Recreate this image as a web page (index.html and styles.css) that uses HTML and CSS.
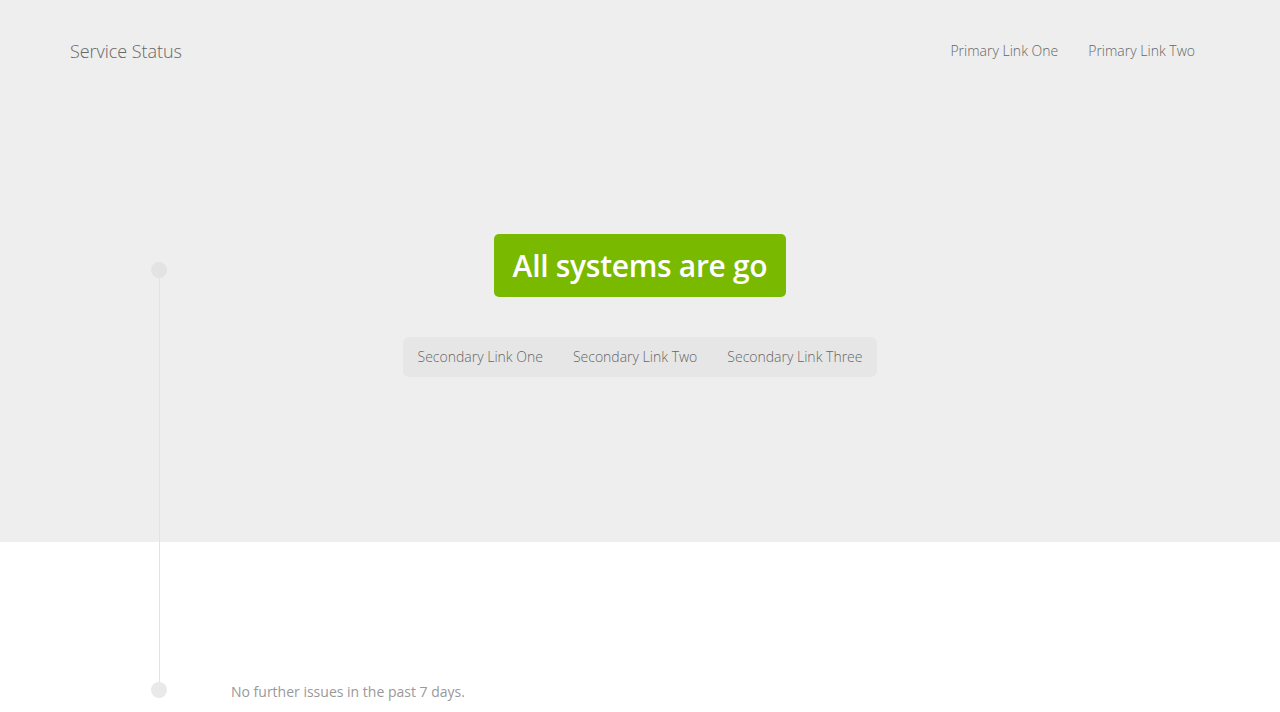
FILE: index.html
```html
<!DOCTYPE html>
<html>
<head>
<meta charset="utf-8">
<link rel="stylesheet" href="styles.css">
</head>
<body>
<div class="hero">
  <header class="topbar">
    <div class="brand">Service Status</div>
    <nav class="primary">
      <a href="#">Primary Link One</a>
      <a href="#">Primary Link Two</a>
    </nav>
  </header>
  <div class="status">
    <div class="badge">All systems are go</div>
    <nav class="secondary">
      <a href="#">Secondary Link One</a>
      <a href="#">Secondary Link Two</a>
      <a href="#">Secondary Link Three</a>
    </nav>
  </div>
</div>
<main class="history">
  <p class="note">No further issues in the past 7 days.</p>
</main>
<div class="timeline">
  <span class="dot top"></span>
  <span class="line"></span>
  <span class="dot bottom"></span>
</div>
</body>
</html>
```
FILE: styles.css
```css
* { box-sizing: border-box; }
html, body { margin: 0; padding: 0; }
body {
  font-family: "Open Sans", "Liberation Sans", sans-serif;
  background: #fff;
  color: #666;
  position: relative;
  height: 712px;
  overflow: hidden;
}
a { text-decoration: none; color: inherit; }
.hero {
  background: #eeeeee;
  height: 542px;
  display: flex;
  flex-direction: column;
}
.topbar {
  display: flex;
  justify-content: space-between;
  align-items: center;
  padding: 26px 85px 0 70px;
  height: 76px;
}
.brand {
  font-size: 18px;
  font-weight: 300;
  color: #666;
  letter-spacing: -0.05px;
}
.primary { display: flex; gap: 30px; padding-bottom: 2px; }
.primary a {
  font-size: 14px;
  font-weight: 300;
  color: #666;
}
.status {
  display: flex;
  flex-direction: column;
  align-items: center;
  padding-top: 158px;
}
.badge {
  background: #79b900;
  color: #fff;
  font-size: 30px;
  font-weight: 600;
  border-radius: 5px;
  height: 63px;
  padding: 0 19px;
  display: flex;
  align-items: center;
  letter-spacing: -0.3px;
}
.secondary {
  margin-top: 40px;
  background: #e6e6e6;
  border-radius: 6px;
  height: 40px;
  display: flex;
  align-items: center;
  padding-bottom: 2px;
}
.secondary a {
  font-size: 14px;
  font-weight: 300;
  color: #666;
  padding: 0 15px;
}
.history { padding: 0 0 0 231px; }
.note {
  margin: 0;
  padding-top: 140px;
  font-size: 14px;
  color: #999;
  font-weight: 400;
}
.timeline {
  position: absolute;
  left: 151px;
  top: 262px;
  width: 16px;
  height: 436px;
}
.timeline .line {
  position: absolute;
  left: 8px;
  top: 8px;
  width: 1px;
  height: 420px;
  background: #e3e3e3;
}
.timeline .dot {
  position: absolute;
  left: 0;
  width: 16px;
  height: 16px;
  border-radius: 50%;
  background: #e3e3e3;
}
.timeline .dot.top { top: 0; }
.timeline .dot.bottom { bottom: 0; background: #e9e9e9; }
```
